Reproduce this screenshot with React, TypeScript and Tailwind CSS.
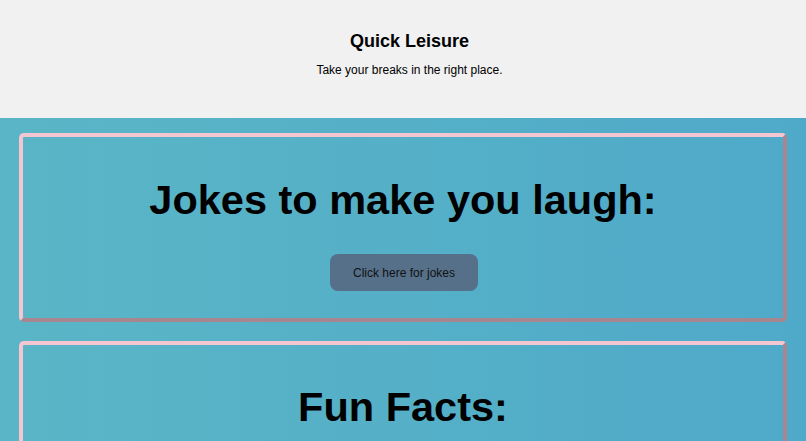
export default function App() {
  return (
    <div className="min-h-screen font-['Liberation_Sans',Arial,sans-serif] text-black">
      <header className="flex h-[118px] flex-col items-center bg-[#f1f1f1] pt-[30px] pl-[13px]">
        <h1 className="text-[18px] font-bold leading-[22px]">Quick Leisure</h1>
        <p className="mt-[10px] text-[12px] leading-[16px]">Take your breaks in the right place.</p>
      </header>
      <main className="flex min-h-[323px] flex-col gap-[19px] bg-gradient-to-r from-[#5ab6c6] to-[#4fa9c9] px-[19px] pt-[15px] pb-[20px]">
        <section className="flex h-[189px] flex-col items-center rounded-[5px] border-[4px] border-t-[#f4c6d2] border-l-[#f4c6d2] border-r-[#a88690] border-b-[#a88690] pt-[38px]">
          <h2 className="text-[41.5px] font-bold leading-[50px]">Jokes to make you laugh:</h2>
          <button
            type="button"
            className="mt-[29px] ml-[2px] h-[37px] w-[148px] rounded-[8px] bg-[#56708a] text-[12px] text-[#111]"
          >
            Click here for jokes
          </button>
        </section>
        <section className="flex h-[189px] flex-col items-center rounded-[5px] border-[4px] border-t-[#f4c6d2] border-l-[#f4c6d2] border-r-[#a88690] border-b-[#a88690] pt-[37px]">
          <h2 className="text-[41.5px] font-bold leading-[50px]">Fun Facts:</h2>
        </section>
      </main>
    </div>
  );
}
